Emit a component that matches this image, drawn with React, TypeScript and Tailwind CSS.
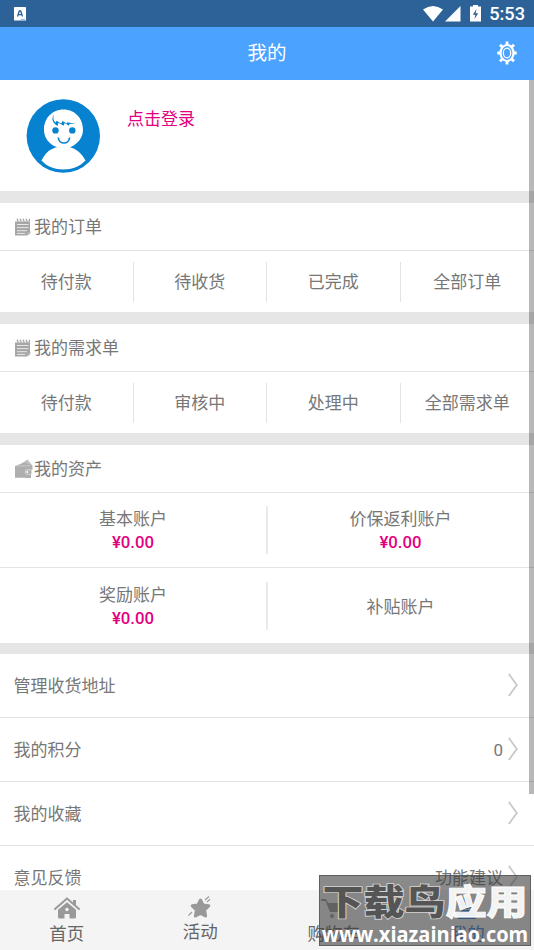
import type { ReactNode } from "react";

const orderTabs = ["待付款", "待收货", "已完成", "全部订单"];
const demandTabs = ["待付款", "审核中", "处理中", "全部需求单"];

const menuItems = [
  { label: "管理收货地址", value: "" },
  { label: "我的积分", value: "0" },
  { label: "我的收藏", value: "" },
  { label: "意见反馈", value: "功能建议" },
];

function NoteIcon() {
  return (
    <svg className="h-[18px] w-[17px]" viewBox="0 0 17 18">
      <path d="M0 3.500h15v10l-2.500 4H0z" fill="#a6a6a6" />
      <path d="M2 .8l1.300 3M5 .8l1.300 3M8 .8l1.300 3M11 .8l1.300 3M14.500.8l-.3 3" stroke="#a6a6a6" strokeWidth="1.300" />
      <path d="M2 6.500h11.500M2 9.600h11.500M2 12.700h10M2 15.400h8" stroke="#e8e8e8" strokeWidth="1" />
      <path d="M11 17.300l1.500-3 3.500-.8-1.500 2.800z" fill="#b5b5b5" />
    </svg>
  );
}

function WalletIcon() {
  return (
    <svg className="h-5 w-[18px]" viewBox="0 0 18 20">
      <path d="M4 6l8.500-5.500L17 6z" fill="#c2c2c2" />
      <path d="M0 7L10 3.500l7.500 3v4.200h-6v5h4.500v3H0z" fill="#aeaeae" />
      <path d="M1 7l14-.3" stroke="#cfcfcf" strokeWidth=".8" />
      <path d="M10 10.500h6v8.300h-6z" fill="#aeaeae" />
      <rect x="10.500" y="10.800" width="6" height="4.500" rx="1" fill="#aeaeae" stroke="#dedede" strokeWidth=".8" />
      <circle cx="12.300" cy="13" r="1" fill="#fff" />
    </svg>
  );
}

function Avatar() {
  return (
    <svg className="h-[74px] w-[74px]" viewBox="0 0 74 74">
      <circle cx="37.300" cy="37" r="36.700" fill="#0782d0" />
      <path d="M15.500 61.500C20 53 25 49.500 31 48.300C22.500 45 18 38.500 18 30.500C18 19 26.500 10.500 37.500 10.500S57 19 57 30.500C57 38.500 52 45 44 48.300C50.500 50 55.500 54 59.500 61.500C54 67.500 46 70.500 37.500 70.500S20.500 67.500 15.500 61.500Z" fill="#fff" />
      <circle cx="29.500" cy="31.400" r="3.200" fill="#0782d0" />
      <circle cx="46.300" cy="31.400" r="3.200" fill="#0782d0" />
      <path d="M32.300 38.500c.5 7.300 10.800 7.300 11.300 0" fill="none" stroke="#0782d0" strokeWidth="1.700" />
      <path d="M28 15.500c-3 4-1.500 8.500 3.500 11.500l1-3.300 5 3 1.300-2.700 4 2.700.7-2 6.500.3-8.500-1.800-.7 1.200-4.300-2.500-1.300 2.500-4.700-2.700-.8 2c-2.500-2.200-3-4.800-1.700-8.200z" fill="#0782d0" />
    </svg>
  );
}

function SettingsIcon() {
  return (
    <svg className="mb-0.5 h-6 w-5" viewBox="0 0 20 24" fill="none" stroke="#fff">
      <ellipse cx="10" cy="12" rx="6.500" ry="8" strokeWidth="2.200" />
      <ellipse cx="10" cy="12" rx="3.700" ry="4.800" strokeWidth="1.300" />
      <path d="M10 .5v4M10 19.500v4M.3 12h3.200M16.500 12h3.200M3 3.800l2.500 2.500M17 3.800l-2.500 2.500M3 20.200l2.500-2.500M17 20.200l-2.500-2.500" strokeWidth="2.800" />
    </svg>
  );
}

function StatusBar() {
  return (
    <div className="flex h-[27px] shrink-0 items-center bg-[#2d6298] pr-[9px] pl-3.5 text-white">
      <svg className="h-3.5 w-3" viewBox="0 0 12 14">
        <rect width="12" height="13.500" rx=".6" fill="#fff" />
        <path d="M3.500 9.500L5.300 4h1.400l1.800 5.500M4.300 7.700h3.400" fill="none" stroke="#2d6298" strokeWidth="1.300" />
        <path d="M6.500 12.300h4.500" stroke="#7b9cc0" strokeWidth=".8" />
      </svg>
      <svg className="ml-auto h-4 w-5" viewBox="0 0 20 16">
        <path d="M0 3.500Q10-3.500 20 3.500L10 15.500z" fill="#fff" />
      </svg>
      <svg className="ml-0.5 h-4 w-4" viewBox="0 0 16 16">
        <path d="M15.500 0v15.500H0z" fill="#fff" />
      </svg>
      <svg className="ml-[9px] h-[17px] w-[11px]" viewBox="0 0 11 17">
        <path d="M3 0h5v1.500h3V16.500H0V1.500h3z" fill="#fff" />
        <path d="M6.500 4L2.800 9.700h2.500L4.500 14l3.700-5.700H5.700z" fill="#2d6298" />
      </svg>
      <span className="ml-2 font-[Roboto] text-[18.200px] leading-[27px] font-medium">5:53</span>
    </div>
  );
}

function SectionTitle({ icon, children }: { icon: ReactNode; children: ReactNode }) {
  return (
    <div className="flex h-12 items-center border-b-[1.500px] border-[#e3e3e3] pl-[15px]">
      <span className="flex w-[18px] justify-start">{icon}</span>
      <span className="pt-0.5 pl-px">{children}</span>
    </div>
  );
}

function TabRow({ items }: { items: string[] }) {
  return (
    <div className="grid h-[61px] grid-cols-4 items-center">
      {items.map((item, i) => (
        <div
          key={item}
          className={`flex h-10 items-center justify-center border-[#e3e3e3] pt-0.5 ${i < 3 ? "border-r-[1.500px]" : ""}`}
        >
          {item}
        </div>
      ))}
    </div>
  );
}

function Account({ name, amount, divider }: { name: string; amount?: string; divider?: boolean }) {
  return (
    <div
      className={`flex h-12 flex-col items-center justify-center border-[#e9e9e9] pt-px leading-6 ${divider ? "-mr-px border-r-2" : ""}`}
    >
      <span>{name}</span>
      {amount && <span className="-mt-px font-[Roboto] text-[16.800px] font-medium text-[#e4007f]">{amount}</span>}
    </div>
  );
}

function Gap() {
  return <div className="h-3 bg-[#e6e6e6]" />;
}

function Watermark() {
  return (
    <div className="absolute top-[875px] left-[319px] h-[71px] w-[212px] overflow-hidden border-[1.500px] border-[#555]/80 bg-[#3c3c3c]/60">
      <div className="mt-1 flex h-[46px] scale-y-[0.87] items-center justify-center text-[41px] leading-[46px] font-black whitespace-nowrap text-[#555] [paint-order:stroke_fill] [-webkit-text-stroke:2px_#d4d4d4]">
        下载鸟<span className="text-white/90 [-webkit-text-stroke:1px_#fff]">应用</span>
      </div>
      <div className="flex h-[18px] scale-y-110 items-center justify-center pb-0.5 font-['Open_Sans'] text-[20px] leading-[18px] font-bold whitespace-nowrap text-white">
        www.xiazainiao.com
      </div>
    </div>
  );
}

export default function App() {
  return (
    <div className="relative flex h-[950px] w-[534px] flex-col overflow-hidden bg-white font-[Roboto,'Noto_Sans_CJK_SC',sans-serif] text-[17px] text-[#777]">
      <StatusBar />
      <header className="grid h-[53px] shrink-0 grid-cols-3 items-center bg-[#4ba3ff] pr-[17px] text-white">
        <span />
        <h1 className="pt-px pl-[17px] text-center text-[19.500px]">我的</h1>
        <span className="justify-self-end"><SettingsIcon /></span>
      </header>

      <main className="min-h-0 flex-1 overflow-hidden">
        <section className="flex h-[111px] pt-[19px] pl-[26px]">
          <Avatar />
          <span className="mt-2 ml-[27px] text-[#e4007f]">点击登录</span>
        </section>
        <Gap />
        <SectionTitle icon={<NoteIcon />}>我的订单</SectionTitle>
        <TabRow items={orderTabs} />
        <Gap />
        <SectionTitle icon={<NoteIcon />}>我的需求单</SectionTitle>
        <TabRow items={demandTabs} />
        <Gap />
        <SectionTitle icon={<WalletIcon />}>我的资产</SectionTitle>
        <div className="grid h-[75px] grid-cols-2 items-center border-b-[1.500px] border-[#e3e3e3]">
          <Account name="基本账户" amount="¥0.00" divider />
          <Account name="价保返利账户" amount="¥0.00" />
        </div>
        <div className="grid h-[75px] grid-cols-2 items-center pt-px">
          <Account name="奖励账户" amount="¥0.00" divider />
          <Account name="补贴账户" />
        </div>
        <div className="h-[11px] bg-[#e6e6e6]" />
        {menuItems.map((item) => (
          <div key={item.label} className="flex h-16 items-center border-b-[1.500px] border-[#e3e3e3] pr-4 pl-[13.500px]">
            <span className="flex-1 pt-[3px]">{item.label}</span>
            <span className="pt-[3px]">{item.value}</span>
            <svg className="mb-0.5 ml-[5px] h-6 w-2.5" viewBox="0 0 10 24" fill="none" stroke="#c8c8c8" strokeWidth="1.800">
              <path d="M.8 1l8 11-8 11" />
            </svg>
          </div>
        ))}
      </main>

      <nav className="grid h-[60px] shrink-0 grid-cols-4 bg-[#f4f4f4] text-[17.500px] leading-6 text-[#666]">
        <div className="flex flex-col items-center pt-[7px]">
          <svg className="h-[22px] w-[26px]" viewBox="0 0 26 22">
            <path d="M1 12L13 1.500 25 12" fill="none" stroke="#999" strokeWidth="2" strokeLinecap="round" />
            <path d="M19 3h3v5.500l-3-2.700z" fill="#999" />
            <path d="M4 12.800l9-7.600 9 7.600V20q0 1.500-1.500 1.500h-5V17h-5v4.500h-5Q4 21.500 4 20z" fill="#999" />
            <circle cx="13" cy="12.500" r="1.700" fill="#f4f4f4" />
          </svg>
          <span className="mt-[3px]">首页</span>
        </div>
        <div className="flex flex-col items-center pt-1.5">
          <svg className="h-[23px] w-[24px]" viewBox="0 0 24 23">
            <path d="M12.500 4l2.500 5 5.800.8-4.200 4 1 6.200-5.100-2.700-5.100 2.700 1-6.200-4.200-4L10 9z" fill="#999" stroke="#999" strokeWidth="3" strokeLinejoin="round" />
            <path d="M17 4l4-3.500M19 6l3-2.800M.5 19.500l3.500-3.500" stroke="#999" strokeWidth="1.100" />
          </svg>
          <span className="mt-px">活动</span>
        </div>
        <div className="flex flex-col items-center pt-[7px]">
          <svg className="h-[22px] w-[26px]" viewBox="0 0 26 22" fill="#999">
            <path d="M0 2h5l2 4h18l-3 9H9L4.500 4H0z" />
            <circle cx="11" cy="19" r="2" />
            <circle cx="20" cy="19" r="2" />
          </svg>
          <span className="mt-[3px]">购物车</span>
        </div>
        <div className="flex flex-col items-center pt-[7px] text-[#2f83dc]">
          <svg className="h-[22px] w-[22px]" viewBox="0 0 22 22" fill="#2f83dc">
            <circle cx="11" cy="6" r="6" />
            <path d="M2 22q0-9 6-9h6q6 0 6 9z" />
          </svg>
          <span className="mt-[3px]">我的</span>
        </div>
      </nav>

      {/* scroll indicator */}
      <div className="absolute top-20 right-0 h-[714px] w-[5px] bg-black/28" />
      <Watermark />
    </div>
  );
}
